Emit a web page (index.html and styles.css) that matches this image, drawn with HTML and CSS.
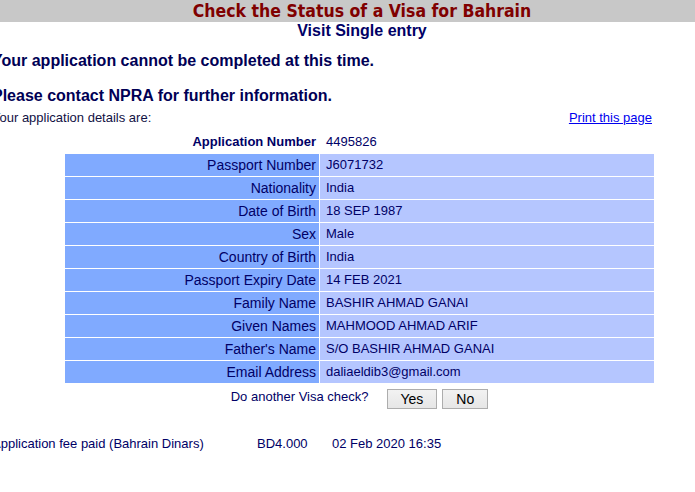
FILE: index.html
```html
<!DOCTYPE html>
<html>
<head>
<meta charset="utf-8">
<title>Check the Status of a Visa for Bahrain</title>
<link rel="stylesheet" href="styles.css">
</head>
<body>
<div class="page">
  <div class="banner">Check the Status of a Visa for Bahrain</div>
  <div class="subtitle">Visit Single entry</div>
  <h2 class="notice first">Your application cannot be completed at this time.</h2>
  <h2 class="notice second">Please contact NPRA for further information.</h2>
  <div class="details-row">
    <span>Your application details are:</span>
    <a href="#" class="print-link">Print this page</a>
  </div>
  <table class="details">
    <tr class="plain"><th>Application Number</th><td>4495826</td></tr>
    <tr><th>Passport Number</th><td>J6071732</td></tr>
    <tr><th>Nationality</th><td>India</td></tr>
    <tr><th>Date of Birth</th><td>18 SEP 1987</td></tr>
    <tr><th>Sex</th><td>Male</td></tr>
    <tr><th>Country of Birth</th><td>India</td></tr>
    <tr><th>Passport Expiry Date</th><td>14 FEB 2021</td></tr>
    <tr><th>Family Name</th><td>BASHIR AHMAD GANAI</td></tr>
    <tr><th>Given Names</th><td>MAHMOOD AHMAD ARIF</td></tr>
    <tr><th>Father's Name</th><td>S/O BASHIR AHMAD GANAI</td></tr>
    <tr><th>Email Address</th><td>daliaeldib3@gmail.com</td></tr>
  </table>
  <div class="again">
    <span class="again-label">Do another Visa check?</span>
    <button class="btn yes">Yes</button>
    <button class="btn">No</button>
  </div>
  <div class="fee">
    <span>Application fee paid (Bahrain Dinars)</span>
    <span>BD4.000</span>
    <span>02 Feb 2020 16:35</span>
  </div>
</div>
</body>
</html>
```
FILE: styles.css
```css
html, body {
  margin: 0;
  padding: 0;
  overflow: hidden;
  background: #ffffff;
}
body {
  font-family: "Liberation Sans", Arial, sans-serif;
  color: #000066;
}
.page {
  width: 740px;
  margin-left: -8px;
}
.banner {
  background: #c8c8c8;
  height: 22px;
  line-height: 23px;
  text-align: center;
  font-family: "DejaVu Sans Condensed", "DejaVu Sans", sans-serif;
  font-weight: bold;
  font-size: 17.5px;
  color: #800000;
}
.subtitle {
  text-align: center;
  font-weight: bold;
  font-size: 16px;
  line-height: 18px;
  color: #000066;
}
.notice {
  margin: 0;
  font-size: 16px;
  line-height: 18px;
  font-weight: bold;
  color: #000055;
}
.notice.first { margin-top: 12px; }
.notice.second { margin-top: 17px; }
.details-row {
  width: 660px;
  padding-right: 3px;
  margin-top: 5px;
  display: flex;
  justify-content: space-between;
  font-size: 13px;
  line-height: 16px;
  color: #111144;
}
.print-link {
  color: #0000ee;
  text-decoration: underline;
}
.details {
  margin-top: 4px;
  margin-left: 72px;
  width: 591px;
  border-collapse: separate;
  border-spacing: 1px;
}
.details th, .details td {
  height: 22px;
  padding: 0;
  line-height: 16px;
  color: #000066;
}
.details th {
  width: 251px;
  padding-right: 3px;
  text-align: right;
  font-weight: normal;
  font-size: 14px;
  background: #80aaff;
}
.details td {
  padding-left: 6px;
  font-size: 13px;
  background: #b5c6ff;
}
.details tr.plain th {
  background: transparent;
  font-weight: bold;
  font-size: 13px;
}
.details tr.plain td {
  background: transparent;
}
.again {
  margin-left: 72px;
  width: 591px;
  margin-top: 5px;
  display: flex;
  justify-content: center;
  align-items: flex-start;
  font-size: 13px;
}
.again-label {
  line-height: 15px;
  margin-right: 18px;
  color: #000066;
}
.btn {
  height: 20px;
  padding: 0 13px;
  margin: 0;
  border: 1px solid #adadad;
  border-radius: 0;
  background: linear-gradient(#f2f2f2, #e6e6e6);
  font-family: "Liberation Sans", Arial, sans-serif;
  font-size: 14px;
  line-height: 18px;
  color: #000000;
}
.btn.yes { margin-right: 5px; }
.fee {
  margin-top: 27px;
  display: grid;
  grid-template-columns: 265px 75px auto;
  font-size: 13px;
  line-height: 16px;
  color: #000066;
}
```
